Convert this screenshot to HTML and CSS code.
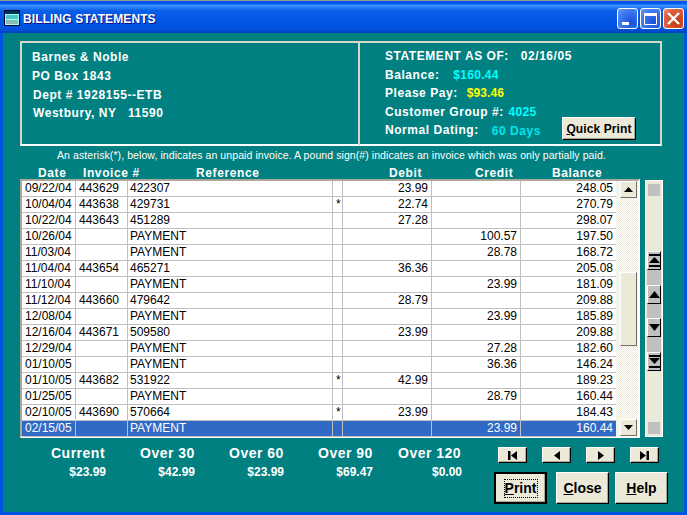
FILE: index.html
```html
<!DOCTYPE html>
<html>
<head>
<meta charset="utf-8">
<title>Billing Statements</title>
<link rel="stylesheet" href="styles.css">
</head>
<body>
<div class="window">
  <div class="titlebar">
    <svg class="appicon" width="16" height="16" viewBox="0 0 16 16"><rect x="0.5" y="0.5" width="15" height="15" fill="#9fe" stroke="#003"/><rect x="1" y="1" width="14" height="3" fill="#035"/><path d="M2 6h12M2 8h12" stroke="#08a"/><path d="M2 11h12M2 13h12" stroke="#777"/></svg>
    <span class="title">BILLING STATEMENTS</span>
    <span class="winbtns">
      <span class="winbtn"><svg width="21" height="21" viewBox="0 0 21 21"><rect x="5" y="14" width="7" height="3" fill="#fff"/></svg></span>
      <span class="winbtn"><svg width="21" height="21" viewBox="0 0 21 21"><path d="M4.5 5.5h12v11h-12z" fill="none" stroke="#fff"/><rect x="4" y="5" width="13" height="3" fill="#fff"/></svg></span>
      <span class="winbtn close"><svg width="21" height="21" viewBox="0 0 21 21"><path d="M5 5l11 11M16 5L5 16" stroke="#fff" stroke-width="2.4"/></svg></span>
    </span>
  </div>
  <div class="client">
    <div class="info">
      <div class="address">
        <div class="addr">Barnes &amp; Noble</div>
        <div class="addr">PO Box 1843</div>
        <div class="addr nudge">Dept # 1928155--ETB</div>
        <div class="addr nudge">Westbury, NY &nbsp; 11590</div>
      </div>
      <div class="statement">
        <div class="line">STATEMENT AS OF: <span class="gapl">02/16/05</span></div>
        <div class="line">Balance: <span class="cyan g1">$160.44</span></div>
        <div class="line">Please Pay: <span class="yellow g4">$93.46</span></div>
        <div class="line">Customer Group #: <span class="cyan g2">4025</span></div>
        <div class="line last">Normal Dating: <span class="cyan g3">60 Days</span><button class="btn quick"><u>Q</u>uick Print</button></div>
      </div>
    </div>
    <div class="note">An asterisk(*), below, indicates an unpaid invoice. A pound sign(#) indicates an invoice which was only partially paid.</div>
    <div class="heads">
      <span class="hd h1">Date</span><span class="hd h2">Invoice #</span><span class="hd h3">Reference</span><span class="hd h4">Debit</span><span class="hd h5">Credit</span><span class="hd h6">Balance</span>
    </div>
    <div class="main">
      <div class="listbox">
        <div class="rows">
          <div class="row"><span>09/22/04</span><span>443629</span><span>422307</span><span></span><span class="n">23.99</span><span class="n"></span><span class="n">248.05</span></div>
          <div class="row"><span>10/04/04</span><span>443638</span><span>429731</span><span>*</span><span class="n">22.74</span><span class="n"></span><span class="n">270.79</span></div>
          <div class="row"><span>10/22/04</span><span>443643</span><span>451289</span><span></span><span class="n">27.28</span><span class="n"></span><span class="n">298.07</span></div>
          <div class="row"><span>10/26/04</span><span></span><span>PAYMENT</span><span></span><span class="n"></span><span class="n">100.57</span><span class="n">197.50</span></div>
          <div class="row"><span>11/03/04</span><span></span><span>PAYMENT</span><span></span><span class="n"></span><span class="n">28.78</span><span class="n">168.72</span></div>
          <div class="row"><span>11/04/04</span><span>443654</span><span>465271</span><span></span><span class="n">36.36</span><span class="n"></span><span class="n">205.08</span></div>
          <div class="row"><span>11/10/04</span><span></span><span>PAYMENT</span><span></span><span class="n"></span><span class="n">23.99</span><span class="n">181.09</span></div>
          <div class="row"><span>11/12/04</span><span>443660</span><span>479642</span><span></span><span class="n">28.79</span><span class="n"></span><span class="n">209.88</span></div>
          <div class="row"><span>12/08/04</span><span></span><span>PAYMENT</span><span></span><span class="n"></span><span class="n">23.99</span><span class="n">185.89</span></div>
          <div class="row"><span>12/16/04</span><span>443671</span><span>509580</span><span></span><span class="n">23.99</span><span class="n"></span><span class="n">209.88</span></div>
          <div class="row"><span>12/29/04</span><span></span><span>PAYMENT</span><span></span><span class="n"></span><span class="n">27.28</span><span class="n">182.60</span></div>
          <div class="row"><span>01/10/05</span><span></span><span>PAYMENT</span><span></span><span class="n"></span><span class="n">36.36</span><span class="n">146.24</span></div>
          <div class="row"><span>01/10/05</span><span>443682</span><span>531922</span><span>*</span><span class="n">42.99</span><span class="n"></span><span class="n">189.23</span></div>
          <div class="row"><span>01/25/05</span><span></span><span>PAYMENT</span><span></span><span class="n"></span><span class="n">28.79</span><span class="n">160.44</span></div>
          <div class="row"><span>02/10/05</span><span>443690</span><span>570664</span><span>*</span><span class="n">23.99</span><span class="n"></span><span class="n">184.43</span></div>
          <div class="row sel"><span>02/15/05</span><span></span><span>PAYMENT</span><span></span><span class="n"></span><span class="n">23.99</span><span class="n">160.44</span></div>
        </div>
        <div class="vscroll">
          <div class="sbtn"><svg width="9" height="5" viewBox="0 0 9 5"><path d="M4.5 0L9 5H0z"/></svg></div>
          <div class="thumb"></div>
          <div class="sbtn"><svg width="9" height="5" viewBox="0 0 9 5"><path d="M0 0h9L4.5 5z"/></svg></div>
        </div>
      </div>
      <div class="side">
        <div class="cap"></div>
        <div class="jumps">
          <div class="jbtn"><svg width="11" height="13" viewBox="0 0 11 13"><path d="M0 0h11v2H0zM5.500 3L11 9H0zM0 11h11v2H0z"/></svg></div>
          <div class="jbtn"><svg width="11" height="7" viewBox="0 0 11 7"><path d="M5.500 0L11 7H0z"/></svg></div>
          <div class="jbtn"><svg width="11" height="7" viewBox="0 0 11 7"><path d="M0 0h11L5.500 7z"/></svg></div>
          <div class="jbtn"><svg width="11" height="13" viewBox="0 0 11 13"><path d="M0 0h11v2H0zM0 3h11L5.500 9zM0 11h11v2H0z"/></svg></div>
        </div>
        <div class="cap"></div>
      </div>
    </div>
    <div class="footer">
      <div class="aging">
        <div class="age"><div class="alabel">Current</div><div class="aval">$23.99</div></div>
        <div class="age"><div class="alabel">Over 30</div><div class="aval">$42.99</div></div>
        <div class="age"><div class="alabel">Over 60</div><div class="aval">$23.99</div></div>
        <div class="age"><div class="alabel">Over 90</div><div class="aval">$69.47</div></div>
        <div class="age wide"><div class="alabel">Over 120</div><div class="aval">$0.00</div></div>
      </div>
      <div class="actions">
        <div class="navs">
          <button class="btn nav"><svg width="9" height="9" viewBox="0 0 9 9"><path d="M0 0h2.500v9H0zM9 0v9L3 4.500z"/></svg></button>
          <button class="btn nav"><svg width="6" height="9" viewBox="0 0 6 9"><path d="M6 0v9L0 4.500z"/></svg></button>
          <button class="btn nav"><svg width="6" height="9" viewBox="0 0 6 9"><path d="M0 0v9l6-4.500z"/></svg></button>
          <button class="btn nav"><svg width="9" height="9" viewBox="0 0 9 9"><path d="M9 0H6.500v9H9zM0 0v9l6-4.500z"/></svg></button>
        </div>
        <div class="cmds">
          <button class="btn cmd default"><span class="focus"><u>P</u>rint</span></button>
          <button class="btn cmd"><u>C</u>lose</button>
          <button class="btn cmd"><u>H</u>elp</button>
        </div>
      </div>
    </div>
  </div>
</div>
</body>
</html>
```
FILE: styles.css
```css
* { box-sizing: border-box; }
html, body { margin: 0; padding: 0; }
body { width: 687px; height: 515px; overflow: hidden; font-family: "Liberation Sans", Arial, sans-serif; font-size: 12px; }
.window { width: 687px; height: 515px; display: flex; flex-direction: column; background: #0054e3; border-top: 1px solid #999; }
.titlebar { height: 32px; flex: none; display: flex; align-items: center; padding: 3px 3px 0 4px; color: #fff;
  background: linear-gradient(#0a5be8 0, #0058ee 8%, #3a93ff 14%, #0a5fe8 30%, #0054e3 70%, #0050d8 90%, #0040b8 100%); }
.appicon { flex: none; margin-top: -1px; }
.title { margin-left: 3px; margin-top: 1px; font-weight: bold; font-size: 12px; letter-spacing: 0.1px; text-shadow: 1px 1px #0f1089; }
.winbtns { margin-left: auto; display: flex; gap: 2px; margin-top: -1px; }
.winbtn { width: 21px; height: 21px; display: block; border: 1px solid #fff; border-radius: 3px; background: radial-gradient(circle at 70% 70%, #1a50d8, #3c78f0 60%, #6a9cf8); overflow: hidden; }
.winbtn svg { display: block; margin: -1px; }
.winbtn.close { background: radial-gradient(circle at 70% 70%, #c03a10, #e06040 70%, #eaa080); }
.client { flex: 1; margin: 0 3px 3px; background: #008080; padding: 8px 0 0 17px; display: flex; flex-direction: column; min-height: 0; }
.info { display: flex; width: 642px; height: 105px; flex: none; color: #fff; font-weight: bold; letter-spacing: 0.55px; }
.address { width: 339px; border: 2px solid #d8d8c8; border-right: 1px solid #d8d8c8; border-bottom-color: #fff; padding: 5px 0 0 10px; }
.addr { height: 19px; line-height: 19px; }
.nudge { margin-left: 1px; margin-top: -0.500px; }
.statement { flex: 1; border: 2px solid #d8d8c8; border-left: 1px solid #d8d8c8; border-bottom-color: #fff; padding: 4px 0 0 25px; }
.line { height: 18.600px; line-height: 19px; white-space: nowrap; }
.last { display: flex; align-items: center; }
.gapl { margin-left: 8px; }
.cyan { color: #0ff; }
.yellow { color: #ff0; }
.g1 { margin-left: 10px; letter-spacing: 0.3px; }
.g2 { margin-left: 1px; letter-spacing: 0.3px; }
.g4 { margin-left: 5px; letter-spacing: 0.1px; }
.g3 { margin-left: 13px; margin-top: 2px; color: #00e4ee; }
.btn { font-family: inherit; font-weight: bold; color: #000; background: #ece9d8; border: 1px solid; border-color: #fff #000 #000 #fff; box-shadow: inset -1px -1px #aca899; padding: 0; display: flex; align-items: center; justify-content: center; border-radius: 0; }
.quick { width: 74px; height: 23px; margin-left: 21px; margin-top: -4px; font-size: 12px; letter-spacing: 0.1px; white-space: nowrap; }
.note { height: 18px; flex: none; line-height: 18px; width: 642px; padding-left: 37px; color: #fff; font-size: 10.500px; white-space: nowrap; letter-spacing: 0.08px; }
.heads { height: 15px; flex: none; display: flex; line-height: 19px; color: #fff; font-weight: bold; letter-spacing: 0.6px; white-space: nowrap; }
.hd { display: block; flex: none; }
.h1 { margin-left: 18px; width: 45px; }
.h2 { width: 113px; }
.h3 { width: 193px; }
.h4 { width: 86px; }
.h5 { width: 77px; }
.h6 { width: 60px; }
.main { display: flex; gap: 5px; flex: none; height: 259px; }
.listbox { width: 620px; height: 259px; display: flex; background: #ece9d8; border: 2px solid; border-color: #aca899 #fff #fff #aca899; }
.rows { width: 594px; flex: none; background: #fff; }
.row { display: grid; grid-template-columns: 54px 52px 205px 10px 89px 89px 95px; height: 16px; line-height: 15px; border-bottom: 1px solid #c0c0c0; color: #000; font-size: 12px; }
.row span { display: block; padding: 0 3px; border-right: 1px solid #c0c0c0; white-space: nowrap; overflow: hidden; }
.row span:nth-child(3) { padding-left: 2px; }
.row span:last-child { border-right: 0; }
.row .n { text-align: right; padding-right: 3px; }
.row.sel { background: #316ac5; color: #fff; border-bottom-color: #c0c0c0; }
.vscroll { width: 22px; flex: none; display: flex; flex-direction: column; justify-content: space-between; padding: 0 1px 0 4px; position: relative;
  background: repeating-conic-gradient(#ece9d8 0 25%, #fff 0 50%) 0 0 / 2px 2px; }
.sbtn { height: 17px; background: #ece9d8; display: flex; align-items: center; justify-content: center; border: 1px solid; border-color: #fff #716f64 #716f64 #fff; }
.sbtn svg { display: block; }
.thumb { position: absolute; left: 4px; top: 91px; width: 17px; height: 74px; background: #ece9d8; border: 1px solid; border-color: #fff #716f64 #716f64 #fff; }
.side { width: 18px; height: 257px; margin-top: 1px; background: #ece9d8; border: 1px solid #fff; display: flex; flex-direction: column; justify-content: space-between; padding: 3px 1px 2px; }
.cap { height: 12px; background: #c0c0c0; margin: 0 1px; }
.jumps { background: #c0c0c0; height: 120px; margin-top: 4px; display: flex; flex-direction: column; justify-content: space-between; }
.jbtn { height: 19px; background: #c0c0c0; display: flex; align-items: center; justify-content: center; border: 1px solid; border-color: #fff #000 #000 #fff; }
.jbtn svg { display: block; }
.footer { display: flex; flex: 1; }
.aging { display: flex; width: 458px; padding: 7px 0 0 31px; color: #fff; font-weight: bold; }
.age { width: 89px; flex: none; }
.age.wide { margin-left: -9px; }
.alabel { width: 56px; font-size: 14px; line-height: 16px; letter-spacing: 0.5px; white-space: nowrap; }
.aval { width: 55px; margin-top: 4px; text-align: right; font-size: 12px; line-height: 14px; }
.wide .aval { width: 64px; }
.actions { flex: 1; }
.navs { display: flex; gap: 15px; margin: 9px 0 0 20px; }
.nav { width: 29px; height: 16px; }
.nav svg { display: block; }
.cmds { display: flex; margin: 9px 0 0 16px; }
.cmd { width: 53px; height: 32px; font-size: 14px; letter-spacing: 0; margin-right: 6px; }
.cmd.default { margin-right: 9px; border: 2px solid #000; outline: 0; }
.focus { display: block; border: 1px dotted #000; padding: 1px 0 0; width: 34px; height: 19px; line-height: 15px; }
```
